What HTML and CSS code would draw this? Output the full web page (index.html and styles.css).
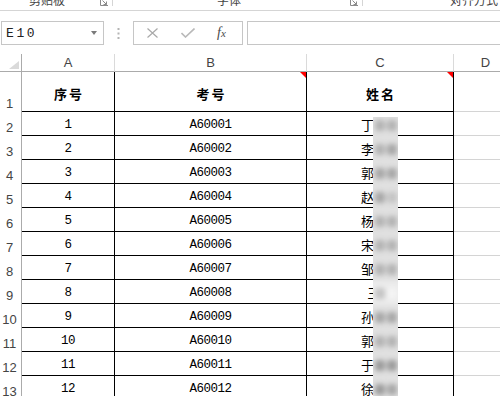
FILE: index.html
```html
<!DOCTYPE html>
<html lang="zh">
<head>
<meta charset="utf-8">
<title>Sheet</title>
<link rel="stylesheet" href="styles.css">
</head>
<body>
<div class="ribbon">
  <div class="grp grp1">
    <span class="glabel l1">剪贴板</span>
    <svg class="launch" width="8" height="8" viewBox="0 0 8 8"><path d="M0.5 0v7.5H8" fill="none" stroke="#8a8a8a"/><path d="M2.5 2.5l4 4M3.5 6.5h3v-3" fill="none" stroke="#8a8a8a"/></svg>
  </div>
  <div class="grp grp2">
    <span class="glabel l2">字体</span>
    <svg class="launch" width="8" height="8" viewBox="0 0 8 8"><path d="M0.5 0v7.5H8" fill="none" stroke="#8a8a8a"/><path d="M2.5 2.5l4 4M3.5 6.5h3v-3" fill="none" stroke="#8a8a8a"/></svg>
  </div>
  <div class="grp grp3">
    <span class="glabel l3">对齐方式</span>
  </div>
</div>

<div class="fbar">
  <div class="namebox"><span class="nb-text">E10</span><span class="nb-arrow"></span></div>
  <svg class="vdots" width="3" height="11" viewBox="0 0 3 11"><rect x="0.5" y="0" width="2" height="2" fill="#b4b4b4"/><rect x="0.5" y="4.5" width="2" height="2" fill="#b4b4b4"/><rect x="0.5" y="9" width="2" height="2" fill="#b4b4b4"/></svg>
  <div class="fbtns">
    <svg class="btn-x" width="11" height="10" viewBox="0 0 11 10"><path d="M0.5 0.5l10 9M10.5 0.5l-10 9" stroke="#a9a9a9" stroke-width="1.2" fill="none"/></svg>
    <svg class="btn-ok" width="14" height="10" viewBox="0 0 14 10"><path d="M0.5 5l4 4 9-8.5" stroke="#b9b9b9" stroke-width="1.6" fill="none"/></svg>
    <span class="btn-fx">f<span class="fx-x">x</span></span>
  </div>
  <div class="finput"></div>
</div>

<div class="sheet">
  <div class="corner"><span class="corner-tri"></span></div>
  <div class="ch">A</div>
  <div class="ch">B</div>
  <div class="ch">C</div>
  <div class="ch">D</div>

  <div class="rh">1</div>
  <div class="c hd">序号</div>
  <div class="c hd note">考号</div>
  <div class="c hd note">姓名</div>
  <div class="d"></div>

  <div class="rh">2</div><div class="c num">1</div><div class="c num">A60001</div><div class="c nm">丁<span class="hid">某某</span></div><div class="d"></div>
  <div class="rh">3</div><div class="c num">2</div><div class="c num">A60002</div><div class="c nm">李<span class="hid">某某</span></div><div class="d"></div>
  <div class="rh">4</div><div class="c num">3</div><div class="c num">A60003</div><div class="c nm">郭<span class="hid">某某</span></div><div class="d"></div>
  <div class="rh">5</div><div class="c num">4</div><div class="c num">A60004</div><div class="c nm">赵<span class="hid">某某</span></div><div class="d"></div>
  <div class="rh">6</div><div class="c num">5</div><div class="c num">A60005</div><div class="c nm">杨<span class="hid">某某</span></div><div class="d"></div>
  <div class="rh">7</div><div class="c num">6</div><div class="c num">A60006</div><div class="c nm">宋<span class="hid">某某</span></div><div class="d"></div>
  <div class="rh">8</div><div class="c num">7</div><div class="c num">A60007</div><div class="c nm">邹<span class="hid">某某</span></div><div class="d"></div>
  <div class="rh">9</div><div class="c num">8</div><div class="c num">A60008</div><div class="c nm">王<span class="hid">某</span></div><div class="d"></div>
  <div class="rh">10</div><div class="c num">9</div><div class="c num">A60009</div><div class="c nm">孙<span class="hid">某某</span></div><div class="d"></div>
  <div class="rh">11</div><div class="c num">10</div><div class="c num">A60010</div><div class="c nm">郭<span class="hid">某某</span></div><div class="d"></div>
  <div class="rh">12</div><div class="c num">11</div><div class="c num">A60011</div><div class="c nm">于<span class="hid">某某</span></div><div class="d"></div>
  <div class="rh">13</div><div class="c num">12</div><div class="c num">A60012</div><div class="c nm">徐<span class="hid">某某</span></div><div class="d"></div>

  <div class="strip">
    <div class="strip-in">
      <div class="bl"><span class="dt g2"></span><span class="dt g2"></span></div>
      <div class="bl"><span class="dt g2"></span><span class="dt g1"></span></div>
      <div class="bl"><span class="dt g1"></span><span class="dt g1"></span></div>
      <div class="bl"><span class="dt g1"></span><span class="dt g3"></span></div>
      <div class="bl"><span class="dt g2"></span><span class="dt g2"></span></div>
      <div class="bl"><span class="dt g2"></span><span class="dt g2"></span></div>
      <div class="bl"><span class="dt g2"></span><span class="dt g2"></span></div>
      <div class="bl lite"><span class="dt g3"></span><span class="dt g4"></span></div>
      <div class="bl"><span class="dt g1"></span><span class="dt g1"></span></div>
      <div class="bl"><span class="dt g2"></span><span class="dt g2"></span></div>
      <div class="bl"><span class="dt g0"></span><span class="dt g0"></span></div>
      <div class="bl"><span class="dt g0"></span><span class="dt g1"></span></div>
    </div>
  </div>
</div>
</body>
</html>
```
FILE: styles.css
```css
html, body {
  margin: 0;
  padding: 0;
}
body {
  width: 500px;
  height: 396px;
  overflow: hidden;
  background: #fff;
  font-family: "Noto Sans CJK SC", sans-serif;
}

/* ribbon remnants */
.ribbon {
  height: 10px;
  border-bottom: 1px solid #d5d5d5;
  display: flex;
  overflow: hidden;
}
.grp {
  display: flex;
  align-items: flex-start;
  height: 10px;
  flex: none;
}
.grp1 { width: 112px; border-right: 1px solid #d5d5d5; height: 6px; }
.grp2 { width: 249px; border-right: 1px solid #d5d5d5; height: 6px; }
.grp3 { flex: 1; }
.glabel {
  font-size: 12px;
  line-height: 12px;
  margin-top: -6px;
  color: #444;
  white-space: nowrap;
}
.l1 { margin-left: 29px; }
.l2 { margin-left: 104px; }
.l3 { margin-left: 87px; }
.launch {
  margin-left: auto;
  margin-right: 4px;
  margin-top: -2px;
}

/* formula bar */
.fbar {
  display: flex;
  align-items: center;
  margin-top: 10px;
  height: 24px;
}
.namebox {
  box-sizing: border-box;
  margin-left: 1px;
  width: 103px;
  height: 24px;
  border: 1px solid #c6c6c6;
  display: flex;
  align-items: center;
  padding-left: 4px;
}
.nb-text {
  font-family: "Liberation Mono", monospace;
  font-size: 13px;
  letter-spacing: 2.6px;
  color: #222;
  padding-top: 1px;
}
.nb-arrow {
  margin-left: auto;
  margin-right: 6px;
  width: 0;
  height: 0;
  border-left: 3.5px solid transparent;
  border-right: 3.5px solid transparent;
  border-top: 4px solid #7a7a7a;
}
.vdots {
  margin-left: 13px;
  flex: none;
}
.fbtns {
  box-sizing: border-box;
  margin-left: 13px;
  width: 110px;
  height: 24px;
  border: 1px solid #c6c6c6;
  display: flex;
  align-items: center;
  flex: none;
}
.btn-x { margin-left: 13px; }
.btn-ok { margin-left: 23px; }
.btn-fx {
  margin-left: 22px;
  font-family: "Liberation Serif", serif;
  font-style: italic;
  font-size: 14px;
  color: #4a4a4a;
  line-height: 14px;
}
.fx-x { font-size: 11px; }
.finput {
  box-sizing: border-box;
  margin-left: 4px;
  flex: 1;
  height: 24px;
  border: 1px solid #c6c6c6;
  border-right: none;
}

/* sheet */
.sheet {
  position: relative;
  margin-top: 9px;
  display: grid;
  grid-template-columns: 22px 93px 192px 147px 64px;
  grid-template-rows: 18px 40px;
  grid-auto-rows: 24px;
  width: 518px;
}
.sheet > div {
  box-sizing: border-box;
}
.corner {
  border-right: 1px solid #ababab;
  border-bottom: 1px solid #ababab;
  position: relative;
}
.corner-tri {
  position: absolute;
  right: 2px;
  bottom: 2px;
  width: 0;
  height: 0;
  border-left: 10px solid transparent;
  border-bottom: 8px solid #dadada;
}
.ch {
  border-right: 1px solid #dadada;
  border-bottom: 1px solid #ababab;
  font-family: "Liberation Sans", sans-serif;
  font-size: 13px;
  line-height: 17px;
  color: #444;
  text-align: center;
}
.rh {
  border-right: 1px solid #ababab;
  font-family: "Liberation Sans", sans-serif;
  font-size: 13px;
  line-height: 15px;
  color: #444;
  display: flex;
  align-items: flex-end;
  justify-content: center;
  padding-bottom: 1px;
  padding-right: 2px;
}
.c {
  border-right: 1px solid #000;
  border-bottom: 1px solid #000;
  display: flex;
  align-items: center;
  justify-content: center;
  color: #000;
}
.hd {
  font-weight: bold;
  font-size: 13px;
  letter-spacing: 2px;
  padding-top: 4px;
  padding-left: 2px;
}
.note { position: relative; }
.note::after {
  content: "";
  position: absolute;
  top: 0;
  right: 0;
  width: 0;
  height: 0;
  border-top: 6px solid #ff0000;
  border-left: 6px solid transparent;
}
.num {
  font-family: "Liberation Mono", monospace;
  font-size: 12.5px;
  letter-spacing: -0.5px;
  padding-top: 3px;
}
.nm {
  font-size: 13px;
  padding-top: 2px;
  padding-left: 1px;
}
.hid { visibility: hidden; }
.d {
  border-right: 1px solid #d4d4d4;
  border-bottom: 1px solid #d4d4d4;
}

/* redaction strip over the name column */
.strip {
  position: absolute;
  left: 373px;
  top: 63px;
  width: 25px;
  height: 279px;
  overflow: hidden;
  background: #e0e0e0;
}
.strip-in {
  margin: -4px -6px 0;
  filter: blur(2.5px);
}
.bl {
  height: 24px;
  display: flex;
  align-items: center;
  justify-content: center;
  gap: 2px;
}
.bl.lite { background: #ececec; }
.dt {
  width: 10px;
  height: 11px;
  border-radius: 3px;
}
.g0 { background: #9c9c9c; }
.g1 { background: #a8a8a8; }
.g2 { background: #b4b4b4; }
.g3 { background: #c4c4c4; }
.g4 { background: #f4f4f4; }
```
